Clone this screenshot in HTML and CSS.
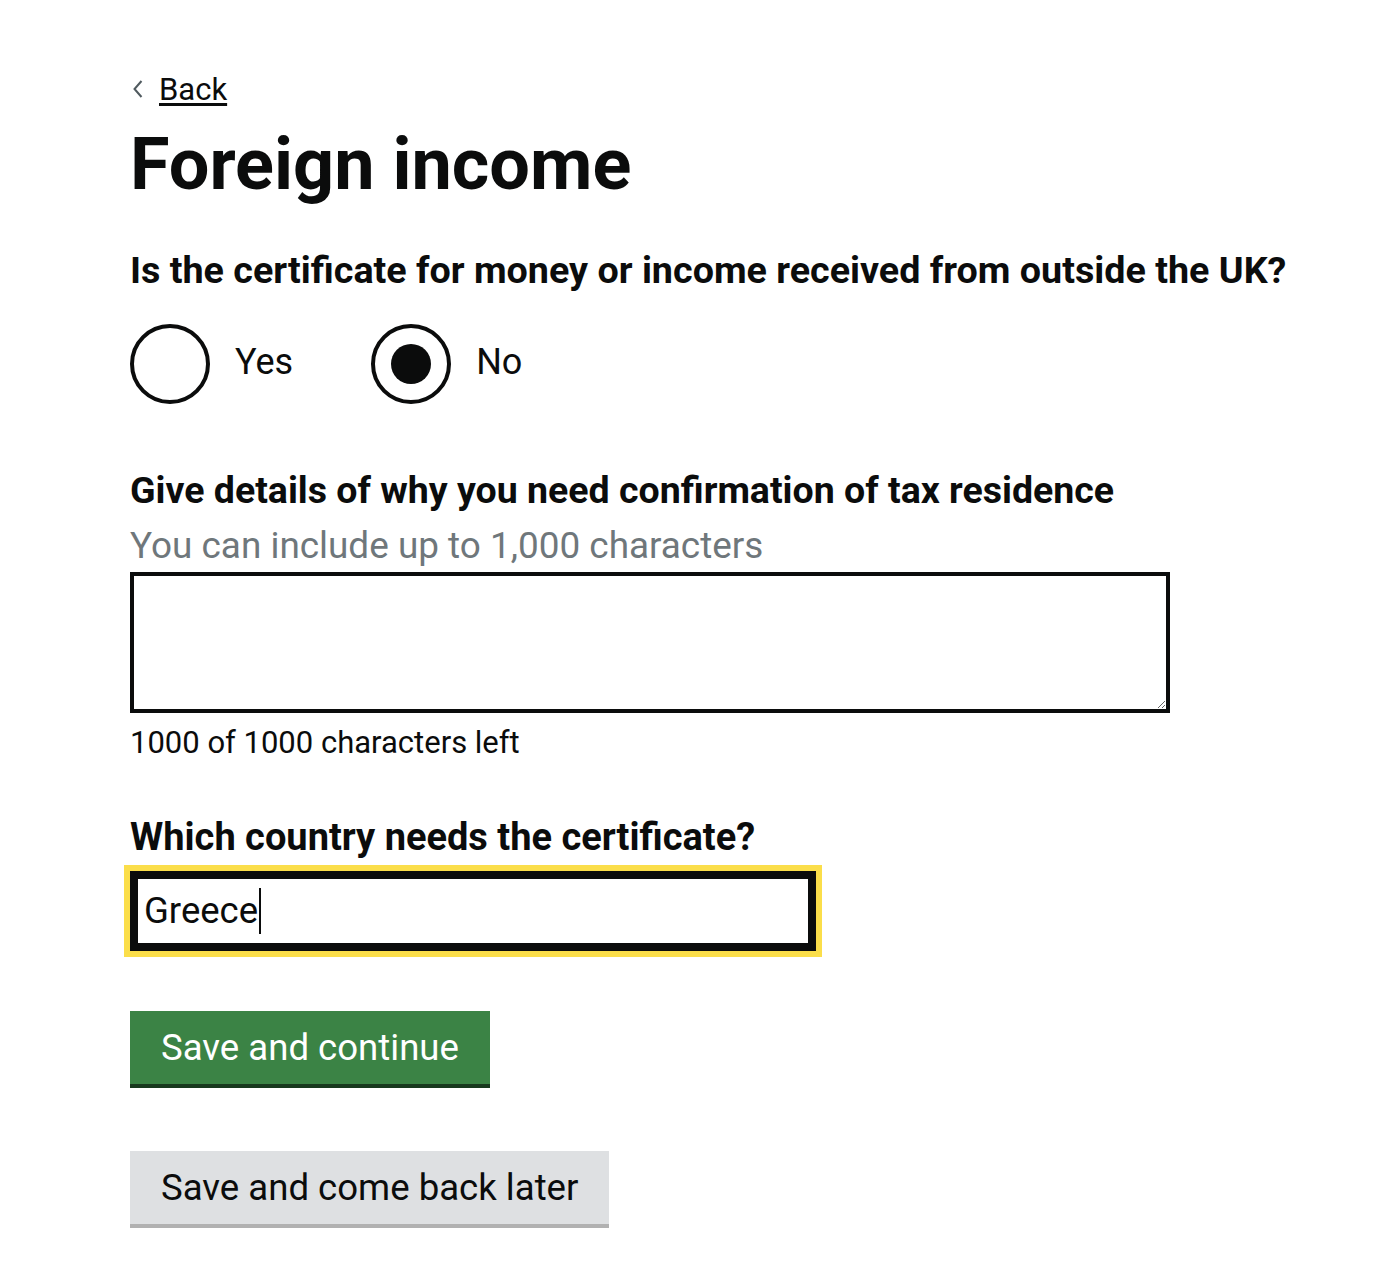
FILE: index.html
```html
<!DOCTYPE html>
<html lang="en">
<head>
<meta charset="utf-8">
<title>Foreign income</title>
<link rel="stylesheet" href="styles.css">
</head>
<body>
<main class="page">
  <a class="back-link" href="#">
    <svg class="back-chevron" width="12" height="20" viewBox="0 0 12 20" aria-hidden="true"><polyline points="9.5,2 2.5,10 9.5,18" fill="none" stroke="#505a5f" stroke-width="2"/></svg>
    <span class="back-text">Back</span>
  </a>
  <h1 class="heading">Foreign income</h1>

  <div class="question" role="heading">Is the certificate for money or income received from outside the UK?</div>
  <div class="radios">
    <label class="radio">
      <span class="radio-circle"></span>
      <span class="radio-label">Yes</span>
    </label>
    <label class="radio">
      <span class="radio-circle radio-circle-checked"><span class="radio-dot"></span></span>
      <span class="radio-label">No</span>
    </label>
  </div>

  <div class="field-label">Give details of why you need confirmation of tax residence</div>
  <div class="hint">You can include up to 1,000 characters</div>
  <textarea class="textarea" aria-label="Details"></textarea>
  <div class="counter">1000 of 1000 characters left</div>

  <div class="country-label">Which country needs the certificate?</div>
  <div class="input-focused" role="textbox" aria-label="Country"><span class="input-value">Greece</span><span class="caret"></span></div>

  <div class="actions">
    <button class="button button-primary" type="button">Save and continue</button>
    <button class="button button-secondary" type="button">Save and come back later</button>
  </div>
</main>
</body>
</html>
```

FILE: styles.css
```css
html, body {
  margin: 0;
  padding: 0;
  background: #ffffff;
}

body {
  font-family: Roboto, "Liberation Sans", sans-serif;
  color: #0b0c0c;
}

.page {
  padding: 71px 0 60px 130px;
}

.back-link {
  display: flex;
  align-items: center;
  width: fit-content;
  color: #0b0c0c;
  font-size: 31px;
  line-height: 38px;
  text-decoration: none;
}

.back-chevron {
  margin-left: 2px;
  margin-right: 15px;
  margin-bottom: 3px;
  flex: none;
}

.back-text {
  text-decoration: underline;
  text-decoration-thickness: 3px;
  text-underline-offset: 3px;
}

.heading {
  margin: 16px 0 0;
  font-size: 72px;
  line-height: 80px;
  font-weight: 700;
}

.question {
  margin-top: 42px;
  font-size: 37.7px;
  line-height: 46px;
  font-weight: 700;
}

.radios {
  display: flex;
  gap: 78px;
  margin-top: 29px;
}

.radio {
  display: flex;
  align-items: center;
  gap: 25px;
}

.radio-circle {
  box-sizing: border-box;
  width: 80px;
  height: 80px;
  border: 4px solid #0b0c0c;
  border-radius: 50%;
  display: flex;
  align-items: center;
  justify-content: center;
  flex: none;
}

.radio-dot {
  width: 40px;
  height: 40px;
  border-radius: 50%;
  background: #0b0c0c;
}

.radio-label {
  font-size: 36px;
  line-height: 80px;
  padding-bottom: 3px;
}

.field-label {
  margin-top: 62px;
  font-size: 37.5px;
  line-height: 46px;
  font-weight: 700;
}

.hint {
  margin-top: 11px;
  font-size: 36.9px;
  line-height: 44px;
  color: #6f777b;
}

.textarea {
  display: block;
  box-sizing: border-box;
  margin: 4px 0 0;
  width: 1040px;
  height: 141px;
  border: 4px solid #0b0c0c;
  border-radius: 0;
  padding: 8px;
  font-family: Roboto, "Liberation Sans", sans-serif;
  font-size: 36px;
  background: #ffffff;
}

.counter {
  margin-top: 11px;
  font-size: 31px;
  line-height: 38px;
}

.country-label {
  margin-top: 52px;
  font-size: 38px;
  line-height: 46px;
  font-weight: 700;
}

.input-focused {
  box-sizing: border-box;
  display: flex;
  align-items: center;
  margin-top: 11px;
  width: 686px;
  height: 80px;
  border: 8px solid #0b0c0c;
  outline: 6px solid #fbde4a;
  padding-left: 6px;
  font-size: 36.5px;
  line-height: 64px;
}

.caret {
  display: block;
  width: 2px;
  height: 46px;
  margin-left: 1px;
  background: #0b0c0c;
}

.actions {
  display: flex;
  flex-direction: column;
  align-items: flex-start;
  gap: 67px;
  margin-top: 60px;
}

.button {
  box-sizing: border-box;
  height: 73px;
  margin: 0;
  padding: 0 31px;
  border: 0;
  border-radius: 0;
  font-family: Roboto, "Liberation Sans", sans-serif;
  font-size: 36.6px;
  line-height: 73px;
  cursor: pointer;
}

.button-primary {
  background: #3b8345;
  color: #ffffff;
  box-shadow: 0 4px 0 #17381d;
}

.button-secondary {
  background: #dee0e2;
  color: #0b0c0c;
  box-shadow: 0 4px 0 #b1b1b1;
}
```
